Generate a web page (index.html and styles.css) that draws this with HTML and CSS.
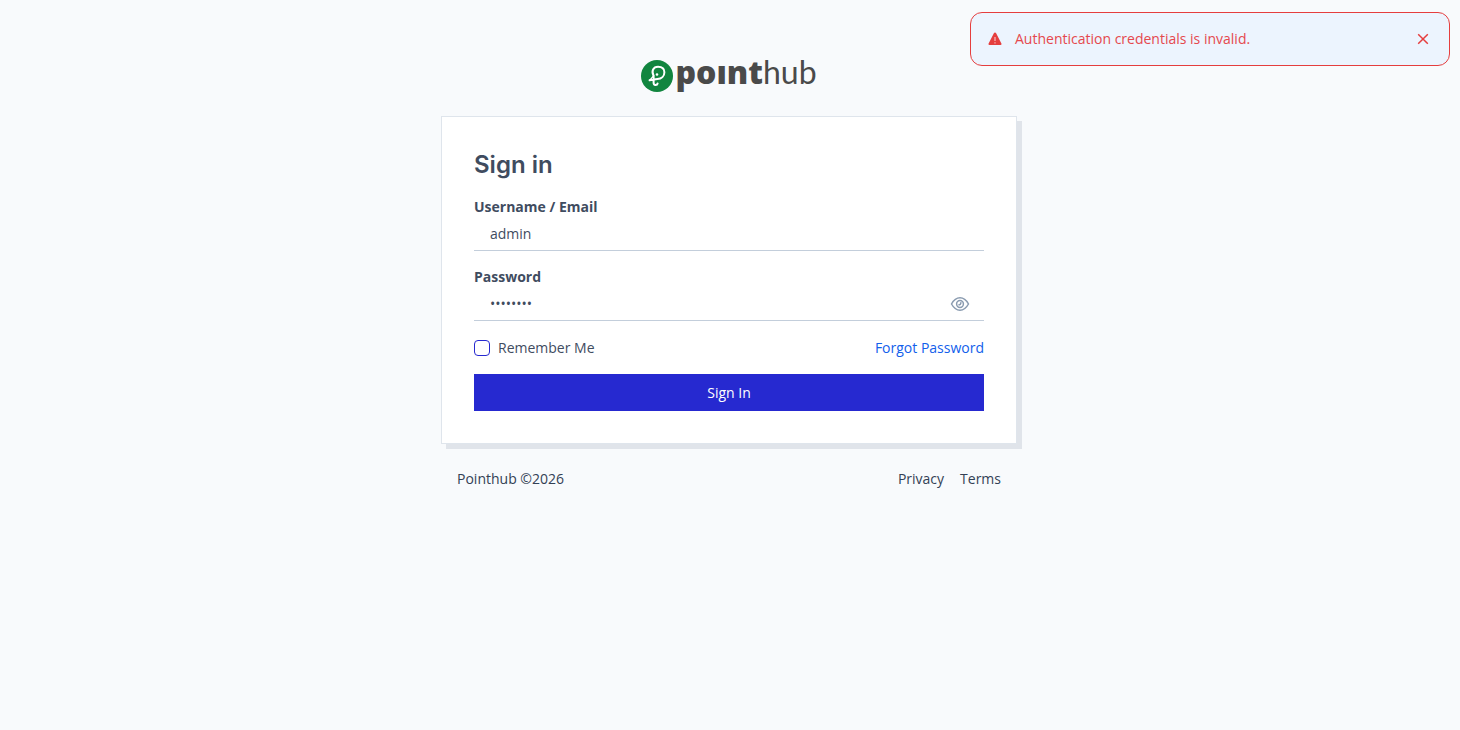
FILE: index.html
```html
<!DOCTYPE html>
<html lang="en">
<head>
    <meta charset="UTF-8">
    <meta name="viewport" content="width=device-width, initial-scale=1.0">
    <title>Sign in</title>
    <link rel="stylesheet" href="styles.css">
</head>
<body>
    <div class="alert" role="alert">
        <svg class="alert-icon" viewBox="0 0 14 14">
            <path d="M7 .5c.5 0 .8.2 1 .6l5.400 10.400c.4.7 0 1.400-.8 1.400H1.400c-.8 0-1.200-.7-.8-1.400L6 1.100c.2-.4.5-.6 1-.6z" fill="#e53e3e"/>
            <path d="M7 5v4M7 10.300v1.300" stroke="#f3b4b8" stroke-width="1.300"/>
        </svg>
        <p>Authentication credentials is invalid.</p>
        <button class="close" type="button" aria-label="Close">
            <svg viewBox="0 0 12 12"><path d="M1.200 1.200l9.600 9.600M10.800 1.200l-9.600 9.600"/></svg>
        </button>
    </div>

    <main class="page">
        <div class="logo">
            <svg class="logo-mark" viewBox="0 0 32 32">
                <circle cx="16" cy="16" r="16" fill="#11853f"/>
                <path d="M12.500 15.500c-2.300-4.300-.3-8.800 4.500-8.800 3.900 0 6.400 2.100 6.400 5.500 0 4-2.900 6.600-7 6.900L8.600 20.300M12.600 15.500v7.300c0 2.800 3.500 3 4 .7" fill="none" stroke="#fff" stroke-width="2" stroke-linecap="round" stroke-linejoin="round"/>
                <path d="M12.600 15.500c-.7 1.700-2.200 2.800-4 4.800" fill="none" stroke="#fff" stroke-width="1.300" stroke-linecap="round"/>
                <circle cx="16" cy="14.500" r="1.300" fill="#fff"/>
            </svg>
            <p class="wordmark"><span class="logo-bold">poınt</span><span class="logo-light">hub</span></p>
        </div>

        <form class="card">
            <h1>Sign in</h1>
            <div class="field">
                <label for="username">Username / Email</label>
                <input type="text" id="username" value="admin">
            </div>
            <div class="field">
                <label for="password">Password</label>
                <div class="password">
                    <input type="password" id="password" value="password">
                    <button class="eye" type="button" aria-label="Show password">
                        <svg viewBox="0 0 20 16">
                            <path d="M1.500 8C3.600 4.200 6.500 1.800 10 1.800S16.400 4.200 18.500 8C16.400 11.800 13.500 14.200 10 14.200S3.600 11.800 1.500 8z"/>
                            <circle cx="10" cy="8" r="3.400"/>
                            <path d="M10.800 6.200c.3 1.700-.6 2.700-2.400 2.600"/>
                        </svg>
                    </button>
                </div>
            </div>
            <div class="options">
                <label class="remember"><input type="checkbox"> Remember Me</label>
                <a href="#">Forgot Password</a>
            </div>
            <button class="submit" type="submit">Sign In</button>
        </form>

        <footer class="footer">
            <span>Pointhub ©2026</span>
            <nav>
                <a href="#">Privacy</a>
                <a href="#">Terms</a>
            </nav>
        </footer>
    </main>
</body>
</html>
```
FILE: styles.css
```css
*{
    padding: 0;
    margin: 0;
    box-sizing: border-box;
}
body{
    background: #f8fafc;
    color: #334155;
    font-family: 'Open Sans', sans-serif;
    font-size: 14px;
    line-height: 20px;
}
input, button{
    font: inherit;
    color: inherit;
}
button{
    border: 0;
    background: none;
    cursor: pointer;
}
a{
    color: inherit;
    text-decoration: none;
}
.page{
    max-width: 594px;
    margin: 0 auto;
    padding: 60px 10px 0 8px;
}

/* alert */
.alert{
    position: fixed;
    top: 12px;
    right: 10px;
    width: 480px;
    max-width: 95%;
    display: flex;
    align-items: center;
    padding: 16px;
    border: 1px solid #e53e3e;
    border-radius: 12px;
    background: #ecf4fe;
    color: #e5484d;
}
.alert-icon{
    width: 14px;
    height: 14px;
    margin: 0 13px 0 1px;
}
.alert p{
    flex: 1;
}
.close{
    width: 20px;
    height: 20px;
    display: flex;
    align-items: center;
    justify-content: center;
}
.close svg{
    width: 12px;
    height: 12px;
    stroke: #e53e3e;
    stroke-width: 1.5;
}

/* logo */
.logo{
    display: flex;
    justify-content: center;
    height: 32px;
    margin-bottom: 24px;
    color: #4a4a4a;
}
.logo-mark{
    width: 32px;
    height: 32px;
    margin-right: 2px;
}
.wordmark{
    line-height: 24px;
}
.logo-bold{
    font-size: 32px;
    font-weight: 800;
}
.logo-light{
    font-family: Lato, sans-serif;
    font-size: 32px;
    font-weight: 400;
}

/* sign in card */
.card{
    display: flex;
    flex-direction: column;
    gap: 16px;
    padding: 32px;
    background: #fff;
    border: 1px solid #dfe5ec;
    box-shadow: 5px 5px 0 #e0e4ea;
    color: #3f4c5f;
}
.card h1{
    font-family: Inter, sans-serif;
    font-size: 24px;
    font-weight: 600;
    line-height: 32px;
}
.field label{
    display: block;
    font-weight: 700;
}
.field input{
    display: block;
    width: 100%;
    height: 34px;
    padding: 0 16px;
    border: 0;
    border-bottom: 1px solid #c3cedb;
    outline: 0;
    background: none;
}
.password{
    position: relative;
}
.eye{
    position: absolute;
    top: 9px;
    right: 14px;
    height: 16px;
}
.eye svg{
    display: block;
    width: 20px;
    height: 16px;
    fill: none;
    stroke: #8a9bb0;
    stroke-width: 1.5;
}
.options{
    display: flex;
    align-items: center;
    justify-content: space-between;
    height: 21px;
}
.options a{
    color: #1260eb;
}
.remember{
    display: flex;
    align-items: center;
    gap: 8px;
}
.remember input{
    appearance: none;
    width: 16px;
    height: 16px;
    border: 1px solid #2629d0;
    border-radius: 4px;
    background: #fff;
}
.submit{
    height: 37px;
    background: #2629d0;
    color: #fff;
}

.footer{
    display: flex;
    justify-content: space-between;
    margin-top: 25px;
    padding: 0 16px;
}
.footer nav{
    display: flex;
    gap: 16px;
}
```
